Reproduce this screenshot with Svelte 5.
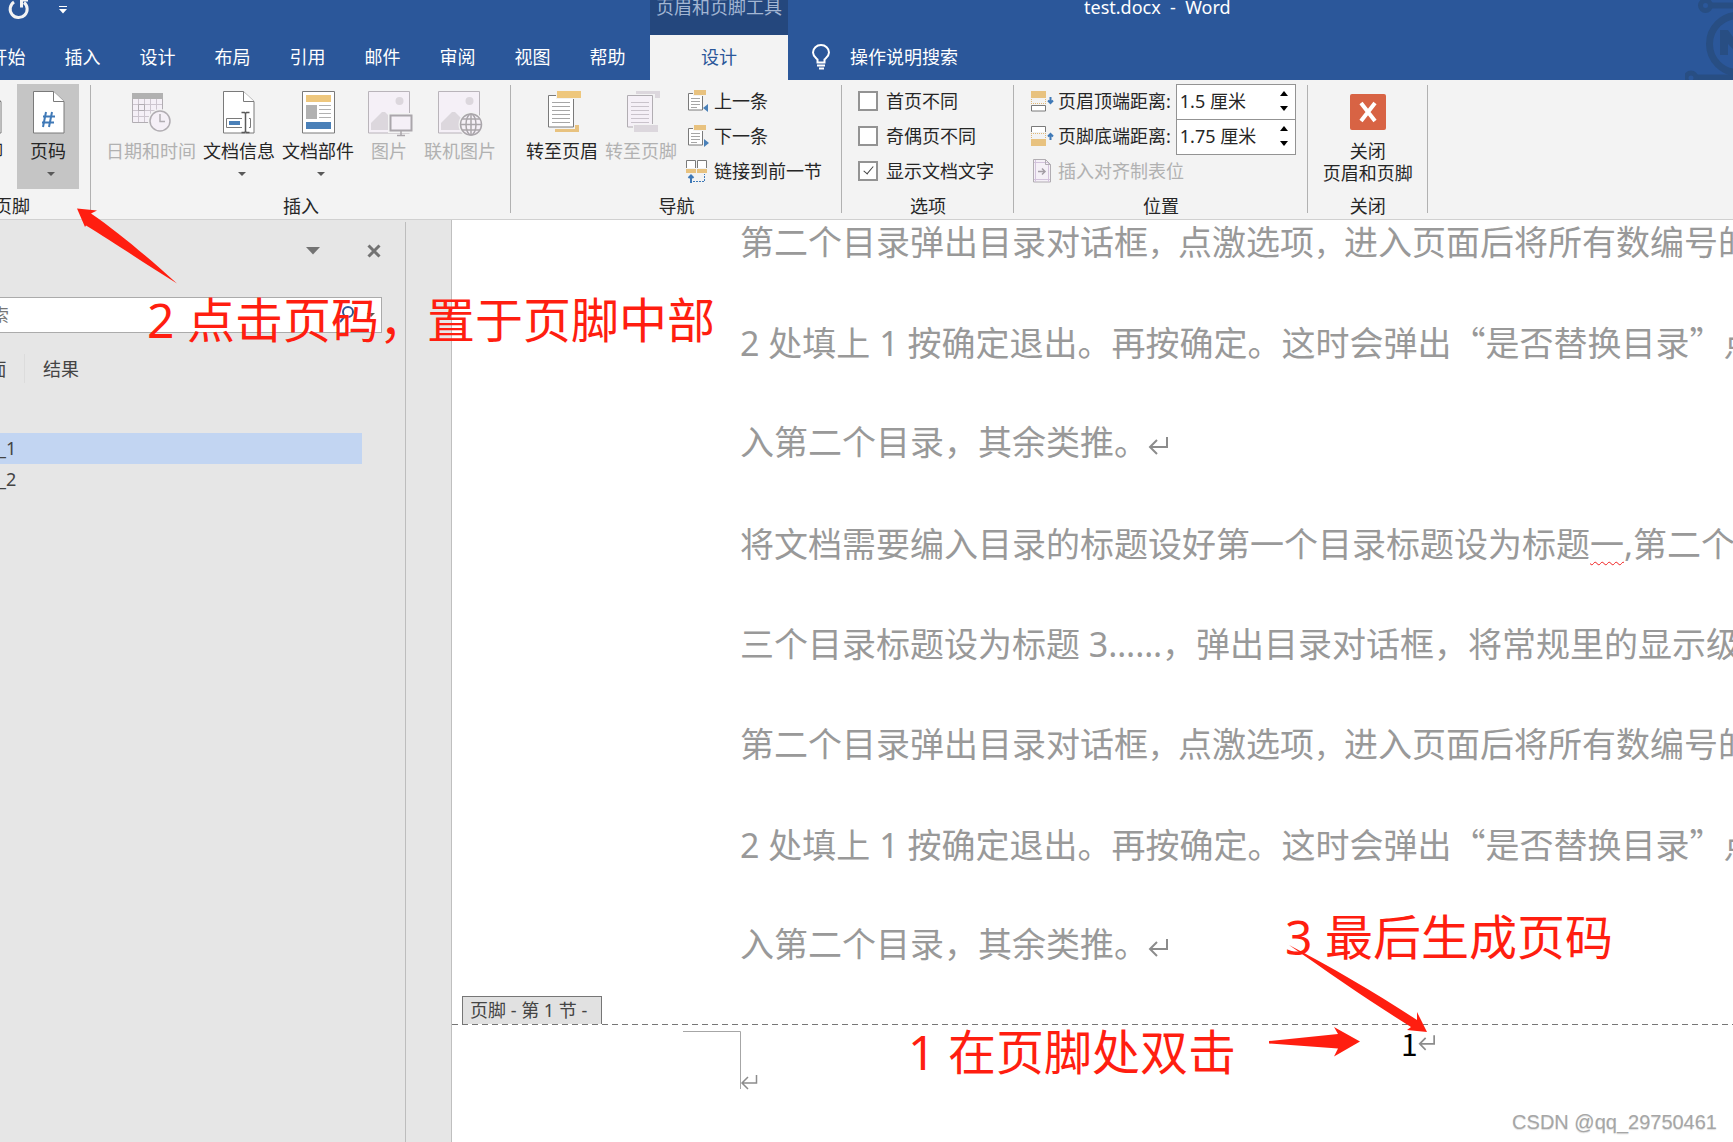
<script lang="ts">
  const tabs = ['开始', '插入', '设计', '布局', '引用', '邮件', '审阅', '视图', '帮助']

  let options = $state([
    { label: '首页不同', checked: false },
    { label: '奇偶页不同', checked: false },
    { label: '显示文档文字', checked: true },
  ])

  let headerDistance = $state('1.5 厘米')
  let footerDistance = $state('1.75 厘米')
  let keyword = $state('')

  const results = ['_1', '_2']
  let selected = $state(0)
</script>

{#snippet caret()}
  <svg class="caret" width="8" height="4" viewBox="0 0 8 4"><path d="M0 0h8L4 4z" fill="#595959" /></svg>
{/snippet}

{#snippet mark()}
  <svg class="mark" width="20" height="18" viewBox="0 0 20 18" fill="none" stroke="#8c8c8c" stroke-width="2">
    <path d="M19 0v10H2M9 3L2 10l7 7" />
  </svg>
{/snippet}

{#snippet sheet(x: number)}
  <path d="M{x} 3.500h20l10.500 10V45H{x}z" fill="#fff" stroke="#7a7a7a" />
  <path d="M{x + 20} 3.500v10h10.500" fill="#fff" stroke="#7a7a7a" />
{/snippet}

{#snippet smallSheet()}
  <path d="M2.500 4.500h14V21h-14z" fill="#fff" stroke="#7a7a7a" />
  <path d="M5 9.500h9M5 12.500h9M5 15.500h9M5 18.500h6" stroke="#a6a6a6" />
  <path d="M7 0h14v7H7z" fill="#f3f3f3" />
  <path d="M8 1h12v5H8z" fill="#e8c27f" />
{/snippet}

{#snippet rest()}
  <span class="line">第二个目录弹出目录对话框<i>，</i>点激选项<i>，</i>进入页面后将所有数编号的</span>
  <span class="line">2 处填上 1 按确定退出。再按确定。这时会弹出<q>是否替换目录</q>点</span>
  <span class="line">入第二个目录，其余类推。{@render mark()}</span>
{/snippet}

<div class="app">
  <header class="title-bar">
    <div class="quick">
      <button class="plain" aria-label="重复">
        <svg width="22" height="20" viewBox="0 0 22 20" fill="none" stroke="#f3f3f3" stroke-width="3">
          <path d="M6 2A8.500 8.500 0 1 0 16 2.500" />
          <path d="M12 0h8v1.500h-5v6h-3z" fill="#f3f3f3" stroke="none" />
        </svg>
      </button>
      <button class="plain" aria-label="自定义快速访问工具栏">
        <svg width="8" height="8" viewBox="0 0 8 8" fill="#fff"><path d="M0 0h8v1H0zM0 3h8L4 7.500z" /></svg>
      </button>
    </div>
    <nav class="tabs">
      {#each tabs as tab}
        <button class="tab">{tab}</button>
      {/each}
    </nav>
    <div class="context">
      <span class="context-name">页眉和页脚工具</span>
      <button class="tab current">设计</button>
    </div>
    <button class="tell-me">
      <svg width="18" height="26" viewBox="0 0 18 26" fill="none" stroke="#fff" stroke-width="2">
        <path d="M5.500 18.500v-3C3.500 13.500 1 12 1 8.500a8 7.500 0 0 1 16 0c0 3.500-2.500 5-4.500 7v3zM5 21.500h8" />
        <path d="M7 24.500h5" />
      </svg>
      操作说明搜索
    </button>
    <span class="file">test.docx&nbsp; -&nbsp; Word</span>
    <svg class="pattern" width="48" height="80" viewBox="0 0 48 80" fill="none" stroke="#284e83">
      <circle cx="20.500" cy="5.500" r="5" stroke-width="5" />
      <path d="M26 5.500h22M11 77.500h37" stroke-width="6" />
      <circle cx="53" cy="44" r="28.500" stroke-width="7" />
      <circle cx="6" cy="78" r="5" stroke-width="5" />
      <path d="M35 30v25h8V44l5 5V37l-5-7z" fill="#284e83" stroke="none" />
    </svg>
  </header>

  <div class="ribbon">
    <section class="group first">
      <div class="tools">
        <button class="big narrow">
          <svg class="icon" viewBox="0 0 48 48">{@render sheet(9.5)}</svg>
          页眉{@render caret()}
        </button>
        <button class="big narrow">
          <svg class="icon" viewBox="0 0 48 48">{@render sheet(9.5)}</svg>
          页脚{@render caret()}
        </button>
        <button class="big narrow pressed">
          <svg class="icon" viewBox="0 0 48 48">
            {@render sheet(9.5)}
            <path d="M22 24l-3 15M28 24l-3 15M19 28.500h12M18 34.500h12" stroke="#3f79b7" stroke-width="2" />
          </svg>
          页码{@render caret()}
        </button>
      </div>
      <h2>页眉和页脚</h2>
    </section>

    <section class="group">
      <div class="tools">
        <button class="big" disabled>
          <svg class="icon" viewBox="0 0 48 48" fill="none">
            <path d="M5.500 10h30v24.500h-30z" fill="#f5f0f7" stroke="#b1adb2" />
            <path d="M11.500 11v23M17.500 11v23M23.500 11v23M29.500 11v23M6 16.500h29M6 22.500h29M6 28.500h29" stroke="#cdc6cf" />
            <path d="M11.500 16.500h6v6h-6z" stroke="#b1adb2" />
            <path d="M5 5h31v6H5z" fill="#b1b1b1" />
            <circle cx="33" cy="33" r="12" fill="#f3f3f3" />
            <circle cx="33" cy="33" r="10" fill="#f5f0f7" stroke="#b1adb2" stroke-width="1.500" />
            <path d="M33 26v7.500h5" stroke="#b1adb2" stroke-width="1.500" />
          </svg>
          日期和时间
        </button>
        <button class="big">
          <svg class="icon" viewBox="0 0 48 48" fill="none">
            {@render sheet(8.5)}
            <path d="M11.500 30.500h24v9h-24z" fill="#fff" stroke="#7a7a7a" />
            <path d="M14 33h11v4H14z" fill="#4a80b8" />
            <path d="M27 23h7v22h-7z" fill="#fff" />
            <path d="M26.500 24.500h3l1 1 1-1h3M26.500 44.500h3l1-1 1 1h3M30.500 25v19" stroke="#595959" stroke-width="1.500" />
          </svg>
          文档信息{@render caret()}
        </button>
        <button class="big">
          <svg class="icon" viewBox="0 0 48 48" fill="none">
            <path d="M8.500 3.500h32V45h-32z" fill="#fff" stroke="#7a7a7a" />
            <path d="M12 7h25v7H12z" fill="#eec77d" />
            <path d="M12 17h11v14H12z" fill="#b1b1b1" />
            <path d="M25 17.500h12M25 21.500h12M25 25.500h12M25 29.500h12" stroke="#b1b1b1" />
            <path d="M12 34h25v7H12z" fill="#4a80b8" />
          </svg>
          文档部件{@render caret()}
        </button>
        <button class="big narrow" disabled>
          <svg class="icon" viewBox="0 0 48 48" fill="none">
            <path d="M3.500 3.500h41V45h-41z" fill="#f5f0f7" stroke="#b9b4ba" />
            <circle cx="34.500" cy="13" r="4" fill="#dcd7dd" />
            <path d="M6 42V35l11-11h3l8 8v10z" fill="#dcd7dd" />
            <path d="M23 25h25v20H23z" fill="#f3f3f3" />
            <path d="M25.500 27.500h21v15h-21z" fill="#f5f0f7" stroke="#aaa6ab" stroke-width="2" />
            <path d="M36 43v4M32 47.500h8" stroke="#aaa6ab" stroke-width="1.500" />
          </svg>
          图片
        </button>
        <button class="big" disabled>
          <svg class="icon" viewBox="0 0 48 48" fill="none">
            <path d="M2.500 3.500h41V45h-41z" fill="#f5f0f7" stroke="#b9b4ba" />
            <circle cx="33.500" cy="13" r="4" fill="#dcd7dd" />
            <path d="M5 42V35l11-11h3l10 10v8z" fill="#dcd7dd" />
            <circle cx="35" cy="36.500" r="12.500" fill="#f3f3f3" />
            <g fill="#f5f0f7" stroke="#aaa6ab" stroke-width="1.500">
              <circle cx="35" cy="36.500" r="10.500" />
              <ellipse cx="35" cy="36.500" rx="5" ry="10.500" />
              <path d="M35 26v21M24.500 36.500h21M26.500 31h17M26.500 42h17" />
            </g>
          </svg>
          联机图片
        </button>
      </div>
      <h2>插入</h2>
    </section>

    <section class="group">
      <div class="tools">
        <button class="big">
          <svg class="icon" viewBox="0 0 48 48" fill="none">
            <path d="M17 37h24v7H17z" fill="#e8c27f" />
            <path d="M8 6h29v35H8z" fill="#f3f3f3" />
            <path d="M10.500 7.500h25V39h-25z" fill="#fff" stroke="#7a7a7a" />
            <path d="M14 14.500h18M14 18.500h18M14 22.500h18M14 26.500h18M14 30.500h18M14 34.500h18" stroke="#a6a6a6" />
            <path d="M18 2h26v9H18z" fill="#f3f3f3" />
            <path d="M19 3h24v7H19z" fill="#eec77d" />
          </svg>
          转至页眉
        </button>
        <button class="big" disabled>
          <svg class="icon" viewBox="0 0 48 48" fill="none">
            <path d="M19 3h24v7H19z" fill="#dcd7dd" />
            <path d="M9 6h29v35H9z" fill="#f3f3f3" />
            <path d="M10.500 7.500h25V39h-25z" fill="#f5f0f7" stroke="#b1adb2" />
            <path d="M14 14.500h18M14 18.500h18M14 22.500h18M14 26.500h18M14 30.500h18M14 34.500h18" stroke="#c9c3cb" />
            <path d="M16 36h26v9H16z" fill="#f3f3f3" />
            <path d="M17 37h24v7H17z" fill="#dcd7dd" />
          </svg>
          转至页脚
        </button>
        <div class="rows nav-rows">
          <button class="small">
            <svg width="24" height="24" viewBox="0 0 24 24" fill="none">
              {@render smallSheet()}
              <path d="M22 15v8l-5-4z" fill="#4a80b8" />
            </svg>
            上一条
          </button>
          <button class="small">
            <svg width="24" height="24" viewBox="0 0 24 24" fill="none">
              {@render smallSheet()}
              <path d="M18 15v8l5-4z" fill="#4a80b8" />
            </svg>
            下一条
          </button>
          <button class="small">
            <svg width="24" height="24" viewBox="0 0 24 24" fill="none">
              <path d="M.5 9V1.500h9V9M11.500 9V1.500h9V9" fill="#fff" stroke="#7a7a7a" />
              <path d="M0 10h10v4H0zM11 10h10v4H11z" fill="#e8c27f" />
              <path d="M5 24v-7M2.500 19L5 16.500 7.500 19" stroke="#3f79b7" stroke-width="2" />
              <path d="M7 22.500h11.500V15" stroke="#3f79b7" stroke-dasharray="2 1" />
            </svg>
            链接到前一节
          </button>
        </div>
      </div>
      <h2>导航</h2>
    </section>

    <section class="group">
      <div class="rows option-rows">
        {#each options as option}
          <label class="check">
            <input type="checkbox" bind:checked={option.checked} />
            {option.label}
          </label>
        {/each}
      </div>
      <h2>选项</h2>
    </section>

    <section class="group">
      <div class="rows">
        <div class="distance">
          <label for="header-distance">
            <svg width="24" height="24" viewBox="0 0 24 24" fill="none">
              <path d="M1 2h15v7H1z" fill="#e8c27f" />
              <path d="M1.500 10v6M15.500 10v6M1 14.500h15" stroke="#e0b878" stroke-dasharray="1 1" />
              <path d="M1.500 16.500h14V22h-14z" fill="#fff" stroke="#7a7a7a" />
              <path d="M20.500 8v6M18 11.500l2.500 2.500 2.500-2.500" stroke="#3f79b7" stroke-width="2" />
            </svg>
            页眉顶端距离:
          </label>
          <div class="spin">
            <input id="header-distance" type="text" bind:value={headerDistance} />
            <div class="steps">
              <button aria-label="增大页眉距离"><svg width="8" height="5" viewBox="0 0 8 5"><path d="M0 5h8L4 0z" /></svg></button>
              <button aria-label="减小页眉距离"><svg width="8" height="5" viewBox="0 0 8 5"><path d="M0 0h8L4 5z" /></svg></button>
            </div>
          </div>
        </div>
        <div class="distance">
          <label for="footer-distance">
            <svg width="24" height="24" viewBox="0 0 24 24" fill="none">
              <path d="M1.500 8V2.500h14V8" fill="#fff" stroke="#7a7a7a" />
              <path d="M1.500 9v6M15.500 9v6M1 9.500h15" stroke="#e0b878" stroke-dasharray="1 1" />
              <path d="M1 15h15v7H1z" fill="#e8c27f" />
              <path d="M20.500 16v-6M18 12.500l2.500-2.500 2.500 2.500" stroke="#3f79b7" stroke-width="2" />
            </svg>
            页脚底端距离:
          </label>
          <div class="spin">
            <input id="footer-distance" type="text" bind:value={footerDistance} />
            <div class="steps">
              <button aria-label="增大页脚距离"><svg width="8" height="5" viewBox="0 0 8 5"><path d="M0 5h8L4 0z" /></svg></button>
              <button aria-label="减小页脚距离"><svg width="8" height="5" viewBox="0 0 8 5"><path d="M0 0h8L4 5z" /></svg></button>
            </div>
          </div>
        </div>
        <button class="small" disabled>
          <svg width="24" height="24" viewBox="0 0 24 24" fill="none">
            <path d="M3.500.500h12l5 5V23h-17z" fill="#f5f0f7" stroke="#b1adb2" />
            <path d="M5.500 1v22M18.500 4v19M4 3.500h14M4 20.500h16" stroke="#d3c3dc" />
            <path d="M15.500.500v5h5" stroke="#b1adb2" />
            <path d="M8 12.500h7M12 9.500l3 3-3 3" stroke="#a39da5" stroke-width="1.500" />
          </svg>
          插入对齐制表位
        </button>
      </div>
      <h2>位置</h2>
    </section>

    <section class="group">
      <div class="tools">
        <button class="big">
          <svg class="icon" viewBox="0 0 48 48">
            <rect x="6" y="6" width="36" height="36" rx="2" fill="#d86344" />
            <path d="M17 15l14 18M31 15L17 33" stroke="#fff" stroke-width="4" />
          </svg>
          关闭<br />页眉和页脚
        </button>
      </div>
      <h2>关闭</h2>
    </section>
  </div>

  <main>
    <aside class="pane">
      <div class="pane-head">
        <button class="plain" aria-label="任务窗格选项">
          <svg width="14" height="8" viewBox="0 0 14 8"><path d="M0 0h14L7 7.500z" fill="#737373" /></svg>
        </button>
        <button class="plain" aria-label="关闭导航窗格">
          <svg width="14" height="14" viewBox="0 0 14 14"><path d="M1.500 1.500l11 11M12.500 1.500l-11 11" stroke="#737373" stroke-width="3" /></svg>
        </button>
      </div>
      <div class="search">
        <input type="text" aria-label="在文档中搜索" placeholder="在文档中搜索" bind:value={keyword} />
        <button class="plain" aria-label="搜索">
          <svg width="16" height="18" viewBox="0 0 16 18" fill="none" stroke="#2b579a" stroke-width="2"><circle cx="9" cy="6" r="5" /><path d="M6 10l-5 6" /></svg>
        </button>
        <button class="plain" aria-label="搜索选项">{@render caret()}</button>
      </div>
      <div class="views">
        <button>标题</button>
        <button>页面</button>
        <button>结果</button>
      </div>
      <ul>
        {#each results as result, i}
          <li><button class:selected={i === selected} onclick={() => (selected = i)}>{result}</button></li>
        {/each}
      </ul>
    </aside>

    <article class="page">
      <div class="text">
        <p>{@render rest()}</p>
        <p>
          <span class="line">将文档需要编入目录的标题设好第一个目录标题设为标题<u>一</u>,第二个</span>
          <span class="line">三个目录标题设为标题 3……，弹出目录对话框，将常规里的显示级</span>
          {@render rest()}
        </p>
      </div>
      <footer>
        <span class="tag">页脚 - 第 1 节 -</span>
        <div class="footer-body">
          <svg width="78" height="62" viewBox="0 0 78 62" fill="none" stroke="#a6a6a6">
            <path d="M0 1.500h57.500V59" />
            <path d="M73.500 45v8H59M65 47l-6 6 6 6" stroke="#8c8c8c" stroke-width="1.500" />
          </svg>
          <span class="number">1<svg width="17" height="16" viewBox="0 0 20 18" fill="none" stroke="#8c8c8c" stroke-width="2"><path d="M19 0v10H2M9 3L2 10l7 7" /></svg></span>
        </div>
      </footer>
    </article>
  </main>

  <div class="notes">
    <svg width="1460" height="1080" viewBox="0 0 1460 1080" fill="#ff1e10">
      <path d="M77 208.500l20 2-6 3C118 232 150 259 177 283.500c-29-18-65-42-91-58l-1 1.500z" />
      <path d="M1289 945c42 22 87 48 128 75v-8l10 20-20-2 4-3c-40-25-82-54-122-82z" />
      <path d="M1269 1041l69-7-4-7 26 14.500-26 15 4-8-69-5z" />
    </svg>
    <span class="note two">2 点击页码，置于页脚中部</span>
    <span class="note three">3 最后生成页码</span>
    <span class="note one">1 在页脚处双击</span>
    <span class="watermark">CSDN @qq_29750461</span>
  </div>
</div>

<style>
  :global(body) {
    margin: 0;
  }

  .app {
    position: relative;
    display: flex;
    flex-direction: column;
    min-height: 100vh;
    overflow: hidden;
    background: #e6e6e6;
    color: #262626;
    font: 18px/22px 'Noto Sans', 'Noto Sans CJK SC', sans-serif;
  }

  button,
  input {
    font: inherit;
    color: inherit;
    border: 0;
    padding: 0;
    margin: 0;
    background: none;
  }

  button {
    cursor: pointer;
    white-space: nowrap;
  }

  button:disabled {
    color: #b1b1b1;
    cursor: default;
  }

  svg {
    display: block;
    flex-shrink: 0;
    overflow: visible;
  }

  .title-bar {
    position: relative;
    display: flex;
    height: 80px;
    background: #2b579a;
    color: #fff;
  }

  .quick {
    position: absolute;
    top: 0;
    left: 8px;
    display: flex;
    gap: 29px;
  }

  .tabs {
    display: flex;
    align-items: flex-end;
    margin-left: -30px;
  }

  .tab {
    width: 75px;
    height: 45px;
    padding-bottom: 2px;
  }

  .context {
    display: flex;
    flex-direction: column;
    width: 138px;
    margin-left: 5px;
    background: #24477d;
    text-align: center;
  }

  .context-name {
    height: 35px;
    line-height: 14px;
    color: #a3b6d3;
  }

  .tab.current {
    width: 100%;
    background: #f3f3f3;
    color: #2b579a;
  }

  .tell-me {
    display: flex;
    align-items: center;
    align-self: flex-end;
    gap: 20px;
    height: 45px;
    padding-bottom: 2px;
    margin-left: 24px;
  }

  .file {
    margin-left: 126px;
    line-height: 14px;
  }

  .pattern {
    margin-left: auto;
    overflow: hidden;
  }

  .ribbon {
    display: flex;
    padding: 4px 0 2px;
    background: #f3f3f3;
    border-bottom: 1px solid #d0d0d0;
  }

  .group {
    position: relative;
    flex-shrink: 0;
    padding: 0 12px;
  }

  .group::after {
    content: '';
    position: absolute;
    top: 1px;
    right: 0;
    bottom: 4px;
    width: 1px;
    background: #b1b1b1;
  }

  .group.first {
    margin-left: -121px;
  }

  h2 {
    margin: 6px 0 0;
    font: inherit;
    text-align: center;
  }

  .tools {
    display: flex;
    gap: 1px;
    height: 105px;
  }

  .big {
    display: flex;
    flex-direction: column;
    align-items: center;
    padding: 4px 3px 0;
  }

  .big.narrow {
    width: 62px;
  }

  .pressed {
    background: #c5c5c5;
  }

  .icon {
    width: 48px;
    height: 48px;
    margin-bottom: 4px;
  }

  .big .caret {
    margin: 10px 0 0 5px;
  }

  .rows {
    display: grid;
    grid-template-rows: repeat(3, 35px);
    padding-left: 4px;
  }

  .nav-rows {
    padding: 0 8px 0 5px;
  }

  .option-rows {
    padding-right: 8px;
  }

  .small,
  .check,
  .distance,
  .distance label {
    display: flex;
    align-items: center;
    gap: 4px;
    white-space: nowrap;
  }

  .small,
  .check,
  .distance label {
    padding-bottom: 2px;
  }

  .check {
    gap: 8px;
  }

  .check input {
    appearance: none;
    position: relative;
    box-sizing: border-box;
    width: 20px;
    height: 20px;
    border: 2px solid #939393;
    background: #fff;
  }

  .check input:checked::after {
    content: '';
    position: absolute;
    top: 1px;
    left: 6px;
    width: 4px;
    height: 9px;
    border: solid #444;
    border-width: 0 1px 1px 0;
    transform: rotate(40deg);
  }

  .distance {
    justify-content: space-between;
    gap: 5px;
  }

  .spin {
    display: flex;
    box-sizing: border-box;
    width: 120px;
    height: 36px;
    border: 1px solid #939393;
    background: #fff;
  }

  .spin input {
    flex: 1;
    min-width: 0;
    padding: 0 0 2px 3px;
  }

  .steps {
    display: grid;
    width: 22px;
    padding: 1px 0 3px;
  }

  .steps button {
    display: grid;
    place-items: center;
  }

  main {
    display: flex;
    flex: 1;
  }

  .pane {
    flex-shrink: 0;
    box-sizing: border-box;
    width: 516px;
    margin: 2px 45px 0 -110px;
    padding-right: 23px;
    border-right: 1px solid #bdbdbd;
    color: #444;
  }

  .plain {
    display: grid;
    place-items: center;
  }

  .pane-head {
    display: flex;
    justify-content: flex-end;
    gap: 47px;
    padding: 22px 1px 0;
    height: 14px;
  }

  .search {
    display: flex;
    align-items: center;
    gap: 12px;
    box-sizing: border-box;
    height: 36px;
    margin-top: 39px;
    padding: 0 6px 0 10px;
    border: 1px solid #ababab;
    background: #fff;
  }

  .search input {
    flex: 1;
    min-width: 0;
  }

  .search input::placeholder {
    color: #767676;
    opacity: 1;
  }

  .views {
    display: flex;
    margin-top: 21px;
  }

  .views button {
    width: 72px;
    height: 29px;
    border-right: 1px solid #dcdcdc;
  }

  .views button:first-child {
    margin-left: -9px;
  }

  .views button:last-child {
    border: 0;
  }

  ul {
    list-style: none;
    margin: 50px 20px 0 0;
    padding: 0;
  }

  li button {
    width: 100%;
    height: 31px;
    padding: 0 0 2px 108px;
    text-align: left;
  }

  .selected {
    background: #c2d5f2;
  }

  .page {
    flex: 1;
    min-width: 0;
    overflow: hidden;
    background: #fff;
    border-left: 1px solid #bfbfbf;
  }

  .text {
    margin-top: -28px;
    padding-left: 288px;
    color: #999;
    font-size: 34px;
    line-height: 100px;
    white-space: nowrap;
  }

  p {
    margin: 0 0 2px;
  }

  .line {
    display: flex;
    align-items: baseline;
    height: 100px;
    white-space: pre;
  }

  /* commas tighten when a full line is justified */
  i {
    font-size: 30px;
    font-style: normal;
  }

  q {
    quotes: '“' '”';
  }

  q::before,
  q::after {
    font-family: 'Noto Sans CJK SC', sans-serif;
  }

  u {
    text-decoration: underline wavy #f02020 1px;
    text-underline-offset: 4px;
  }

  .mark {
    margin-bottom: 5px;
  }

  .tag {
    display: block;
    width: max-content;
    margin: 1px 0 0 10px;
    padding: 2px 14px 3px 7px;
    border: 1px solid #767676;
    border-bottom: 0;
    background: #e1e1e1;
    color: #444;
  }

  .footer-body {
    display: flex;
    align-items: flex-start;
    padding: 6px 0 50px 231px;
    background: repeating-linear-gradient(90deg, #767676 0 6px, transparent 6px 10px) top / 100% 1px no-repeat;
  }

  .number {
    display: flex;
    align-items: center;
    margin-left: 640px;
    color: #000;
    font: 30px/26px 'Noto Sans CJK SC', sans-serif;
  }

  .notes {
    position: absolute;
    inset: 0;
    pointer-events: none;
  }

  .note {
    position: absolute;
    color: #ff1e10;
    font-size: 48px;
    line-height: 60px;
    white-space: nowrap;
  }

  .two {
    left: 147px;
    top: 290px;
  }

  .three {
    left: 1285px;
    top: 907px;
  }

  .one {
    left: 908px;
    top: 1022px;
  }

  .watermark {
    position: absolute;
    right: 16px;
    bottom: 8px;
    color: #a6a6a6;
    font-family: 'Liberation Sans', sans-serif;
    font-size: 20px;
    line-height: 24px;
    text-shadow: 0 1px 1px #ddd;
  }
</style>
